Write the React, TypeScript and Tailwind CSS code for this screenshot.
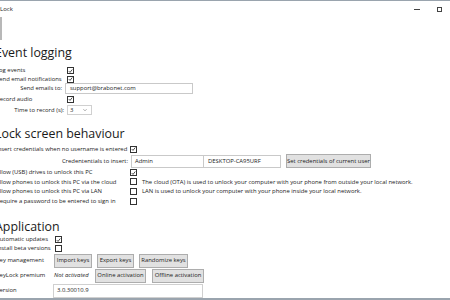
import type { ReactNode } from 'react';

function Check({ on = false }: { on?: boolean }) {
  return (
    <span className="flex h-[7px] w-[7px] items-center justify-center border border-[#333] bg-white">
      {on && (
        <svg viewBox="0 0 10 10" className="h-[6px] w-[6px]">
          <path d="M1.5 5.2 L4 7.8 L8.6 2" fill="none" stroke="#222" strokeWidth="1.6" />
        </svg>
      )}
    </span>
  );
}

function Btn({ children, w }: { children: ReactNode; w: string }) {
  return (
    <span className={`flex h-[14px] items-center justify-center whitespace-nowrap border border-[#adadad] bg-[#e1e1e1] ${w}`}>
      {children}
    </span>
  );
}

function Row({
  label,
  col,
  right = false,
  h,
  children,
}: {
  label: string;
  col: string;
  right?: boolean;
  h: string;
  children?: ReactNode;
}) {
  return (
    <div className={`flex shrink-0 items-center ${h}`}>
      <span className={`shrink-0 whitespace-nowrap ${col} ${right ? 'pr-[3px] text-right' : ''}`}>{label}</span>
      <div className="flex items-center gap-[5px]">{children}</div>
    </div>
  );
}

function Heading({ children, h }: { children: ReactNode; h: string }) {
  return (
    <div className={`flex shrink-0 flex-col justify-start ${h}`}>
      <h2 className="ml-[-1px] text-[12.4px] leading-none text-[#1a1a1a]">{children}</h2>
    </div>
  );
}

export default function App() {
  return (
    <div
      className="relative h-[300px] w-[450px] overflow-hidden bg-white text-[5.9px] text-[#222]"
      style={{ fontFamily: '"Open Sans", "Noto Sans", sans-serif' }}
    >
      <div className="h-px w-full bg-[#9aa4ae]" />
      <div className="flex h-[16px] items-center justify-between">
        <span className="ml-[-10px] text-[6px]">KeyLock</span>
        <div className="mr-[8px] flex items-center gap-[17px]">
          <span className="h-px w-[6px] bg-[#444]" />
          <span className="h-[5px] w-[5px] border border-[#444]" />
        </div>
      </div>
      <div className="h-[23px] w-[2px] bg-[#b8b8b8]" />

      <div className="ml-[-4px] flex flex-col">
        <Heading h="h-[26px] pt-[7px]">Event logging</Heading>
        <Row label="Log events" col="w-[71px]" h="h-[9px]">
          <Check on />
        </Row>
        <Row label="Send email notifications" col="w-[71px]" h="h-[8px]">
          <Check on />
        </Row>
        <Row label="Send emails to:" col="w-[69px]" right h="h-[11px]">
          <span className="flex h-[11px] w-[128px] items-center border border-[#c9c9c9] pl-[4px]">
            support@brabonet.com
          </span>
        </Row>
        <Row label="Record audio" col="w-[71px]" h="h-[10px]">
          <Check on />
        </Row>
        <Row label="Time to record (s):" col="w-[71px]" right h="h-[12px]">
          <span className="flex h-[10px] w-[25px] items-center justify-between border border-[#d0d0d0] px-[2px]">
            3
            <svg viewBox="0 0 10 10" className="mr-[2px] h-[4px] w-[4px]">
              <path d="M1 3 L5 7 L9 3" fill="none" stroke="#666" strokeWidth="1.4" />
            </svg>
          </span>
        </Row>

        <Heading h="h-[28px] pt-[12px]">Lock screen behaviour</Heading>
        <Row label="Insert credentials when no username is entered" col="w-[134px]" h="h-[10px]">
          <Check on />
        </Row>
        <Row label="Credententials to insert:" col="w-[135px]" right h="h-[14px]">
          <div className="flex items-center">
            <span className="flex h-[13px] w-[73px] items-center border border-[#c9c9c9] pl-[3px]">Admin</span>
            <span className="ml-[-1px] flex h-[13px] w-[78px] items-center border border-[#c9c9c9] pl-[4px]">
              DESKTOP-CA95URF
            </span>
            <span className="ml-[5px]">
              <Btn w="w-[85px]">Set credentials of current user</Btn>
            </span>
          </div>
        </Row>
        <Row label="Allow (USB) drives to unlock this PC" col="w-[134px]" h="h-[9px]">
          <Check on />
        </Row>
        <Row label="Allow phones to unlock this PC via the cloud" col="w-[134px]" h="h-[10px]">
          <Check />
          <span className="whitespace-nowrap">
            The cloud (OTA) is used to unlock your computer with your phone from outside your local network.
          </span>
        </Row>
        <Row label="Allow phones to unlock this PC via LAN" col="w-[134px]" h="h-[9px]">
          <Check />
          <span className="whitespace-nowrap">
            LAN is used to unlock your computer with your phone inside your local network.
          </span>
        </Row>
        <Row label="Require a password to be entered to sign in" col="w-[134px]" h="h-[10px]">
          <Check />
        </Row>

        <Heading h="h-[29px] pt-[15px]">Application</Heading>
        <Row label="Automatic updates" col="w-[59px]" h="h-[9px]">
          <Check on />
        </Row>
        <Row label="Install beta versions" col="w-[59px]" h="h-[9px]">
          <Check />
        </Row>
        <Row label="Key management" col="w-[58px]" h="h-[15px]">
          <Btn w="w-[38px]">Import keys</Btn>
          <Btn w="w-[37px]">Export keys</Btn>
          <Btn w="w-[49px]">Randomize keys</Btn>
        </Row>
        <Row label="KeyLock premium" col="w-[58px]" h="h-[15px]">
          <div className="flex items-center">
            <span className="w-[41px] italic">Not activated</span>
            <Btn w="w-[51px]">Online activation</Btn>
            <span className="ml-[6px]">
              <Btn w="w-[52px]">Offline activation</Btn>
            </span>
          </div>
        </Row>
        <Row label="Version" col="w-[57px]" h="h-[15px]">
          <span className="flex h-[14px] w-[150px] items-center border border-[#d0d0d0] pl-[3px]">3.0.30010.9</span>
        </Row>
        <div className="flex shrink-0">
          <span className="ml-[57px] h-[6px] w-[92px] border border-[#adadad] bg-[#e1e1e1]" />
        </div>
      </div>
      <div className="absolute bottom-0 left-0 h-[2px] w-full bg-[#9aa4ae]" />
    </div>
  );
}
